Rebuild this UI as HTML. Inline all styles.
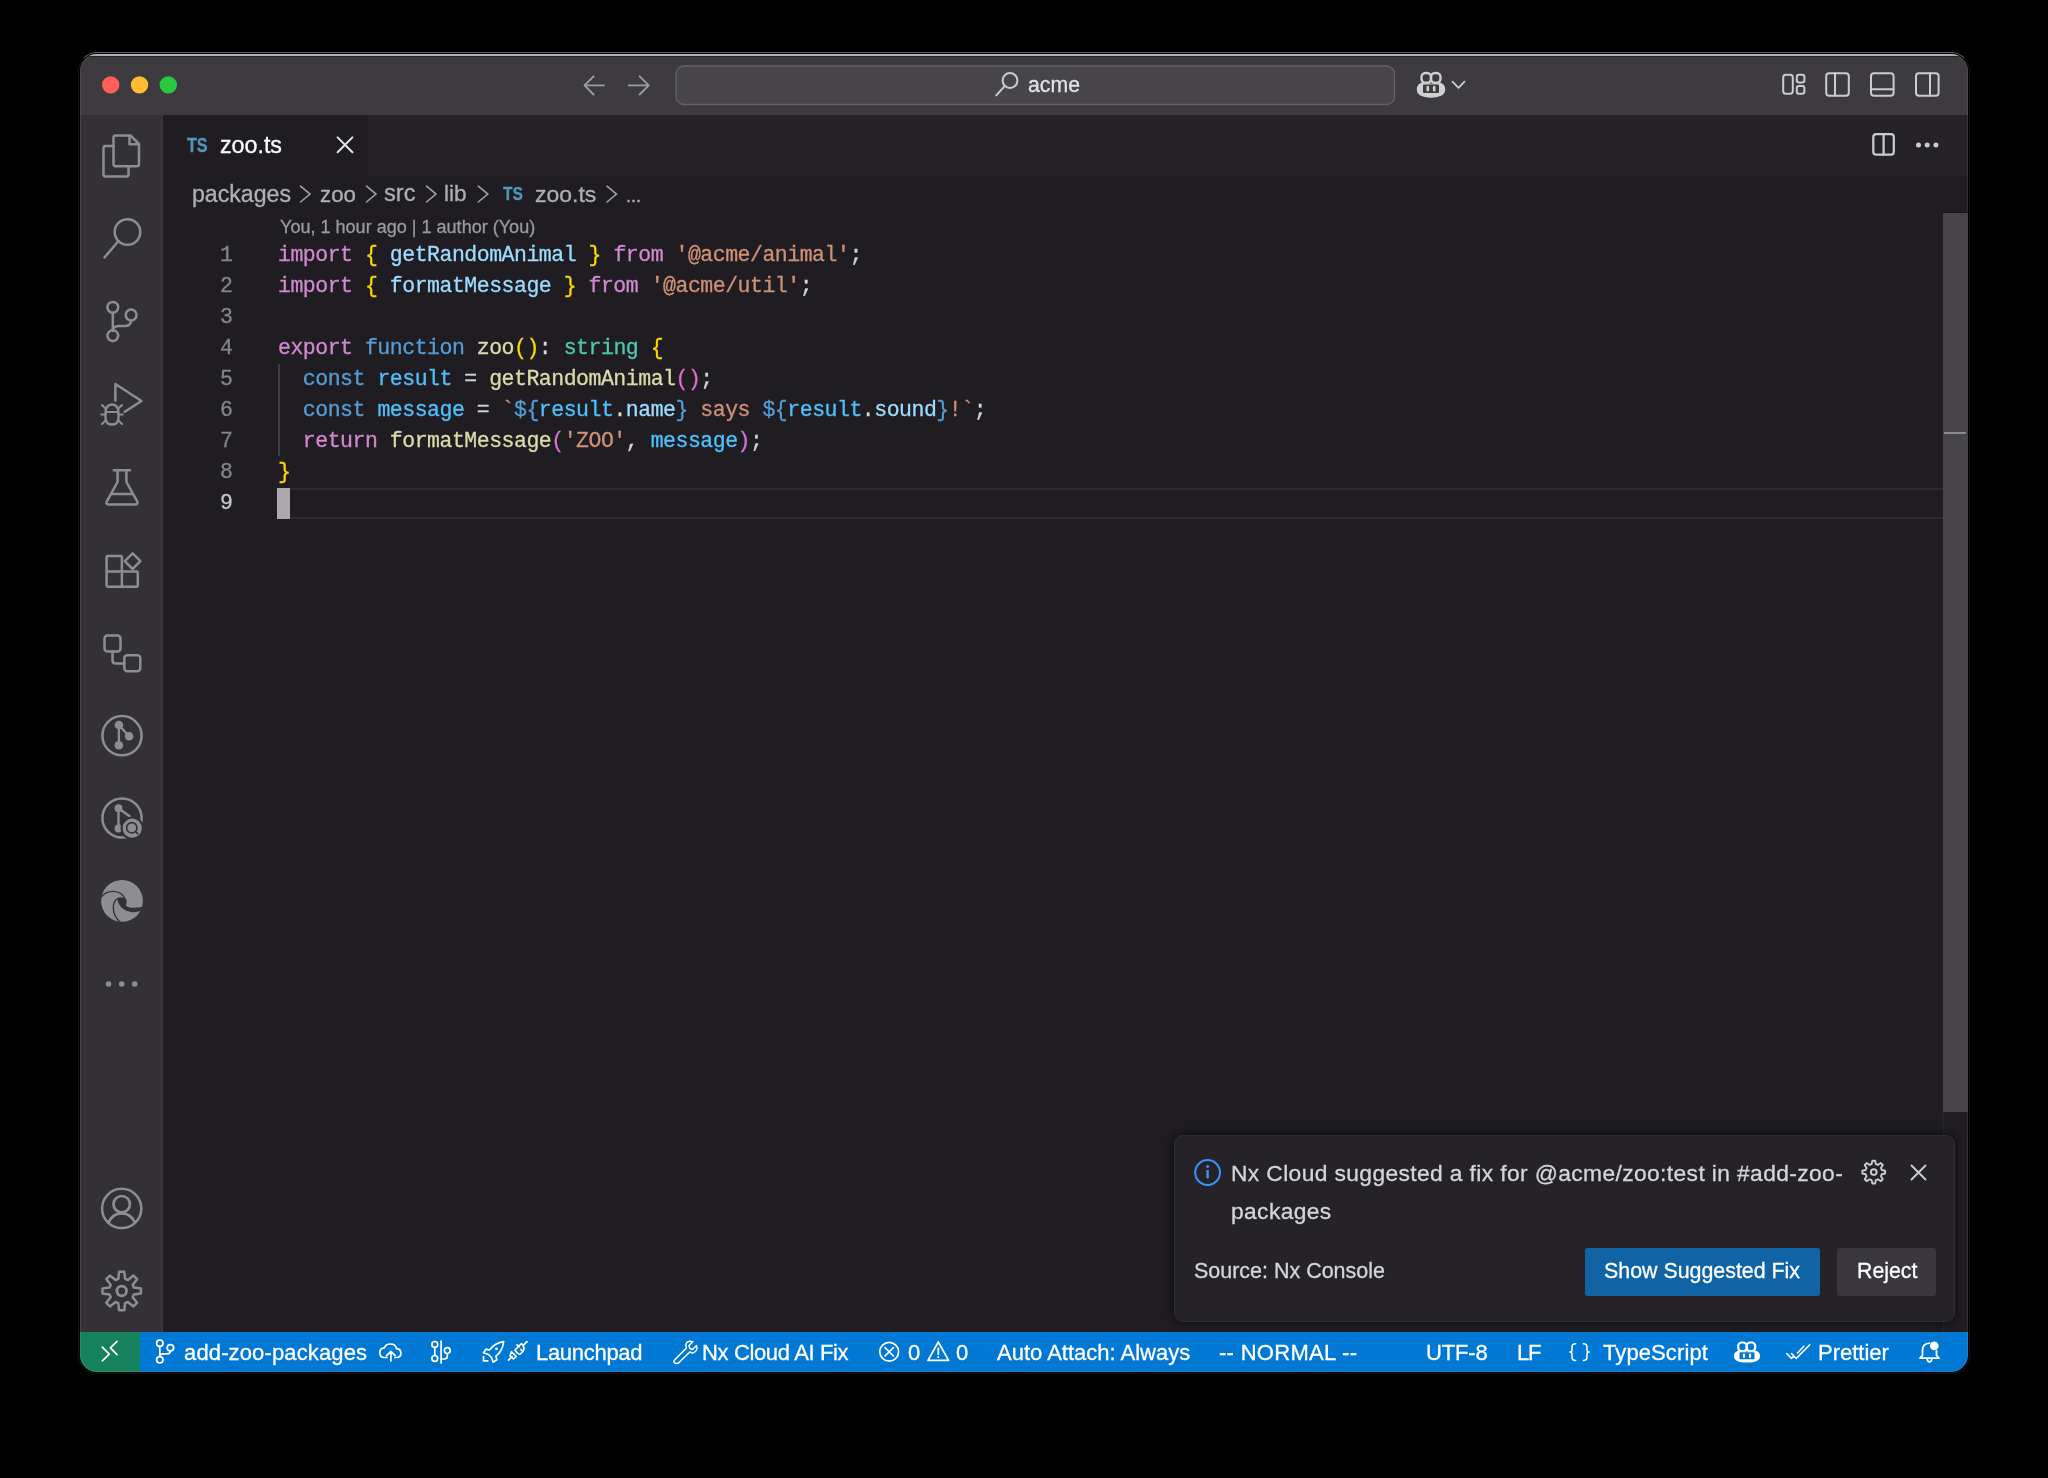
<!DOCTYPE html>
<html><head><meta charset="utf-8">
<style>
html,body{margin:0;padding:0;background:#000;width:2048px;height:1478px;overflow:hidden;}
body{position:relative;font-family:"Liberation Sans",sans-serif;}
.a{position:absolute;}
#win{position:absolute;left:80px;top:54px;width:1888px;height:1318px;border-radius:17px;overflow:hidden;background:#1f1d21;}
.t{position:absolute;white-space:pre;line-height:1;will-change:transform;-webkit-text-stroke:0.3px currentColor;}
.code{will-change:transform;font-family:"Liberation Mono",monospace;font-size:21.5px;letter-spacing:-0.482px;-webkit-text-stroke:0.3px currentColor;white-space:pre;position:absolute;line-height:31px;height:31px;}
svg{position:absolute;left:0;top:0;overflow:visible;}
</style></head>
<body>
<div class="a" style="left:78px;top:52px;width:1892px;height:1322px;box-sizing:border-box;border-radius:19px;background:#000;border:1px solid #141316;border-top-color:#5f5d60;"></div>
<div id="win">
  <div class="a" style="left:0;top:0;width:1888px;height:61px;background:#3d3b3f"></div>
  <div class="a" style="left:0;top:0;width:1888px;height:2px;background:#adabae"></div>
  <div class="a" style="left:0;top:2px;width:1888px;height:1px;background:#252327"></div>
  <div class="a" style="left:0;top:61px;width:83px;height:1217px;background:#333135"></div>
  <div class="a" style="left:81px;top:61px;width:2px;height:1217px;background:#38363a"></div>
  <div class="a" style="left:83px;top:61px;width:1805px;height:61px;background:#252328"></div>
  <div class="a" style="left:83px;top:61px;width:205px;height:61px;background:#1f1d21"></div>
  <div class="a" style="left:0;top:1278px;width:1888px;height:40px;background:#0078d4"></div>
  <div class="a" style="left:0;top:1278px;width:60px;height:40px;background:#16825d"></div>
  <div class="a" style="left:0;top:0;width:1888px;height:1318px;border-radius:17px;box-shadow:inset 0 0 0 1px rgba(255,255,255,0.09);"></div>
</div>
<!-- editor decorations -->
<div class="a" style="left:277px;top:488px;width:1666px;height:2px;background:#2c2a2e"></div>
<div class="a" style="left:277px;top:516.5px;width:1666px;height:2px;background:#2c2a2e"></div>
<div class="a" style="left:277px;top:488px;width:13px;height:31px;background:#aea8ae"></div>
<div class="a" style="left:277.5px;top:364px;width:2px;height:92px;background:#403e42"></div>
<!-- scrollbar -->
<div class="a" style="left:1943px;top:212px;width:24.5px;height:1px;background:#141315"></div>
<div class="a" style="left:1943px;top:213px;width:24.5px;height:899px;background:#464448"></div>
<div class="a" style="left:1944px;top:432px;width:22px;height:2px;background:#8a898c"></div>
<div class="a" style="left:1943px;top:1112px;width:1px;height:220px;background:#29272b"></div>

<!-- notification -->
<div class="a" style="left:1175px;top:1135.5px;width:779px;height:185px;border-radius:8px;background:#252328;box-shadow:0 0 0 1px #2f2d32, 0 0 10px 2px rgba(0,0,0,0.55);"></div>
<div class="a" style="left:1585px;top:1247.5px;width:235px;height:48px;border-radius:3px;background:#1064a6"></div>
<div class="a" style="left:1837px;top:1247.5px;width:99px;height:48px;border-radius:3px;background:#3a383e"></div>

<svg width="2048" height="1478" viewBox="0 0 2048 1478" fill="none" stroke-linecap="round" stroke-linejoin="round">
<!-- traffic lights -->
<circle cx="110.7" cy="84.9" r="8.7" fill="#ff5f57"/>
<circle cx="139.5" cy="84.9" r="8.7" fill="#febc2e"/>
<circle cx="168.3" cy="84.9" r="8.7" fill="#28c840"/>
<!-- nav arrows -->
<g stroke="#9e9da0" stroke-width="1.8">
<path d="M604,85.4H584.8M593.6,76.3L584.5,85.4L593.6,94.5"/>
<path d="M628.8,85.4H648.6M639.6,76.3L648.8,85.4L639.6,94.5"/>
</g>
<!-- search box -->
<rect x="676" y="66" width="718.5" height="38.5" rx="8" fill="#47454a" stroke="#636166" stroke-width="1.3"/>
<g stroke="#cccccc" stroke-width="2">
<circle cx="1010" cy="80.5" r="7.4"/>
<path d="M1004.6,86.2L996.3,95.3"/>
</g>
<!-- copilot title -->
<g stroke="#d0d0d0" stroke-width="2.4" fill="none">
<rect x="1421.5" y="73" width="9.5" height="9.8" rx="4"/>
<rect x="1431" y="73" width="9.5" height="9.8" rx="4"/>
<path d="M1423,83.5 Q1418,84.5 1418,89.5 Q1418,96 1431,96.5 Q1444,96 1444,89.5 Q1444,84.5 1439,83.5" fill="#d0d0d0"/>
<rect x="1423" y="84.5" width="16" height="8.5" rx="1" fill="#3d3b3f" stroke="none"/>
<path d="M1427.8,87v3.2M1434.2,87v3.2" stroke-width="2.6"/>
</g>
<path d="M1452.5,81.6L1458.5,87.8L1464.5,81.6" stroke="#cccccc" stroke-width="1.8"/>
<!-- layout icons -->
<g stroke="#cccccc" stroke-width="2">
<rect x="1783.2" y="74.7" width="9.6" height="19" rx="2.6"/>
<rect x="1796.8" y="74.7" width="7.6" height="7.8" rx="2.2"/>
<rect x="1796.8" y="86" width="7.6" height="7.8" rx="2.2"/>
<rect x="1826.2" y="73.2" width="22.6" height="22.6" rx="3"/>
<path d="M1835,73.2V95.8"/>
<rect x="1871" y="73.2" width="22.6" height="22.6" rx="3"/>
<path d="M1871,89.3H1893.6"/>
<rect x="1916" y="73.2" width="22.6" height="22.6" rx="3"/>
<path d="M1930,73.2V95.8"/>
</g>
<!-- tab close -->
<path d="M337.6,137.4L352.4,152.2M352.4,137.4L337.6,152.2" stroke="#e6e6e6" stroke-width="2"/>
<!-- split + more -->
<g stroke="#cccccc" stroke-width="2.2">
<rect x="1873.3" y="134.2" width="20.5" height="20.5" rx="3"/>
<path d="M1883.6,134.2V154.7"/>
</g>
<g fill="#cccccc">
<circle cx="1918.5" cy="145" r="2.5"/><circle cx="1927.2" cy="145" r="2.5"/><circle cx="1935.9" cy="145" r="2.5"/>
</g>
<!-- breadcrumb chevrons -->
<g stroke="#a0a0a0" stroke-width="1.6" stroke-linejoin="miter">
<path d="M300.5,186.2L310.0,194.1L300.5,202"/>
<path d="M366.5,186.2L376.0,194.1L366.5,202"/>
<path d="M426.5,186.2L436.0,194.1L426.5,202"/>
<path d="M478.3,186.2L487.8,194.1L478.3,202"/>
<path d="M607,186.2L616.5,194.1L607,202"/>
</g>

<!-- activity bar icons -->
<g stroke="#8e8d91" stroke-width="2.5">
<!-- explorer -->
<path d="M128.5,166.5V174.5Q128.5,176.5 126.5,176.5H105.5Q103.5,176.5 103.5,174.5V148Q103.5,146 105.5,146H113.5"/>
<path d="M115.7,135.5H130.5L139,144V164Q139,166.3 136.8,166.3H115.7Q113.5,166.3 113.5,164V137.7Q113.5,135.5 115.7,135.5Z"/>
<path d="M129.5,136V144.2H138.5" />
<!-- search -->
<circle cx="127.5" cy="232" r="12.8"/>
<path d="M118.5,241L104.5,257.5"/>
<!-- scm -->
<circle cx="112.8" cy="307.3" r="5.4"/>
<circle cx="131.1" cy="315" r="5.4"/>
<circle cx="112.8" cy="335.6" r="5.4"/>
<path d="M112.8,312.7V330.2"/>
<path d="M131.1,320.4Q131.1,326 124,326H119Q112.8,326 112.8,331"/>
<!-- debug -->
<path d="M115.4,400.5V384L141.5,401L124.8,411.8"/>
<path d="M105.5,413.5Q105.5,404.5 112,404.5Q118.5,404.5 118.5,413.5V417.5Q118.5,424.5 112,424.5Q105.5,424.5 105.5,417.5Z" stroke-width="2.3"/>
<path d="M105.6,412H118.4M101.2,414.5H105.5M118.5,414.5H122.8M102,405L106,409M122,405L118,409M102,424L106,420M122,424L118,420" stroke-width="2.1"/>
<!-- testing -->
<path d="M113.8,470.3H130M117.6,470.3V482L106.8,501.3Q105.5,504.5 108.5,504.5H135.5Q138.5,504.5 137.2,501.3L126.4,482V470.3M111.5,494H132.5"/>
<!-- extensions -->
<path d="M107.8,555.9H120.7Q121.9,555.9 121.9,557.1V586.8H107.8Q106.6,586.8 106.6,585.6V557.1Q106.6,555.9 107.8,555.9ZM106.6,571.6H136.6Q137.8,571.6 137.8,572.8V585.6Q137.8,586.8 136.6,586.8H121.9"/>
<path d="M132.6,553.4L140.4,561.2L132.6,569L124.8,561.2Z"/>
<!-- remote explorer -->
<rect x="104.5" y="635.5" width="16" height="16" rx="3"/>
<rect x="124.3" y="655.3" width="16" height="16" rx="3"/>
<path d="M112.5,651.5V660.5Q112.5,663.5 115.5,663.5H124.3"/>
<!-- nx -->
<circle cx="122" cy="735.7" r="19.6"/>
<circle cx="122" cy="818" r="19.6"/>
<!-- accounts -->
<circle cx="121.7" cy="1208.4" r="19.6"/>
<circle cx="121.7" cy="1204.2" r="8.2" stroke-width="2.7"/>
<path d="M108.5,1222.8Q112.5,1213.4 121.7,1213.4Q130.9,1213.4 134.9,1222.8" stroke-width="2.7"/>
<!-- settings gear -->
<circle cx="121.7" cy="1291" r="4.8" stroke-width="2.8"/>
</g>
<g fill="#8e8d91" stroke="none">
<circle cx="118.9" cy="725" r="4.3"/><circle cx="129.1" cy="736.2" r="4.3"/><circle cx="118.9" cy="745.3" r="4.3"/>
</g>
<path d="M118.9,725V745.3M118.9,725L129.1,736.2" stroke="#8e8d91" stroke-width="2.4"/>
<!-- nx cloud -->
<g fill="#8e8d91" stroke="none">
<circle cx="118.5" cy="808.2" r="3.9"/><circle cx="118.5" cy="828.5" r="3.9"/>
</g>
<path d="M118.5,808.2V828.5M118.5,808.2L130.5,817" stroke="#8e8d91" stroke-width="2.4"/>
<circle cx="132.2" cy="828.2" r="10.6" fill="#8e8d91" stroke="#333135" stroke-width="2"/>
<circle cx="131.8" cy="827.8" r="5.2" fill="none" stroke="#333135" stroke-width="1.6"/>
<path d="M135.6,831.6L137.6,833.6" stroke="#333135" stroke-width="1.8"/>
<!-- edge -->
<circle cx="122" cy="900.9" r="20.9" fill="#8e8d91" stroke="none"/>
<path d="M101.2,897.2C106,890.2 121,887.5 125.8,900.5M118.8,898.2C112,900.5 110.5,914 120.5,922.5" stroke="#333135" stroke-width="1.4" fill="none"/>
<path fill="#333135" stroke="none" d="M118.7,897.7C120.5,896.8 125,896.8 126.4,900.4C127.2,902.5 126,904 125.8,905.4C128,907.5 133,908.6 142.5,906.8L143,909C140,912 134,912.6 130.8,911.9C126.5,911.5 121.5,909 119,904.1C117.5,901.5 117,899 118.7,897.7Z"/>
<!-- more dots -->
<g fill="#8e8d91"><circle cx="108.6" cy="984" r="2.8"/><circle cx="121.7" cy="984" r="2.8"/><circle cx="134.7" cy="984" r="2.8"/></g>
<!-- gear outline -->
<path stroke="#8e8d91" stroke-width="2.5" d="M118.28,1278.87L119.12,1271.77L124.28,1271.77L125.12,1278.87L127.86,1280.01L133.47,1275.58L137.12,1279.23L132.69,1284.84L133.83,1287.58L140.93,1288.42L140.93,1293.58L133.83,1294.42L132.69,1297.16L137.12,1302.77L133.47,1306.42L127.86,1301.99L125.12,1303.13L124.28,1310.23L119.12,1310.23L118.28,1303.13L115.54,1301.99L109.93,1306.42L106.28,1302.77L110.71,1297.16L109.57,1294.42L102.47,1293.58L102.47,1288.42L109.57,1287.58L110.71,1284.84L106.28,1279.23L109.93,1275.58L115.54,1280.01Z"/>

<!-- notification icons -->
<circle cx="1207.6" cy="1172.5" r="12.4" stroke="#3794ff" stroke-width="2"/>
<circle cx="1207.6" cy="1166.4" r="1.5" fill="#3794ff"/>
<path d="M1207.6,1170V1178.4" stroke="#3794ff" stroke-width="2.4" stroke-linecap="butt"/>
<path stroke="#cccccc" stroke-width="1.9" d="M1871.62,1164.08L1872.40,1160.68L1875.10,1160.68L1875.88,1164.08L1877.92,1164.92L1880.87,1163.07L1882.78,1164.98L1880.93,1167.93L1881.77,1169.97L1885.17,1170.75L1885.17,1173.45L1881.77,1174.23L1880.93,1176.27L1882.78,1179.22L1880.87,1181.13L1877.92,1179.28L1875.88,1180.12L1875.10,1183.52L1872.40,1183.52L1871.62,1180.12L1869.58,1179.28L1866.63,1181.13L1864.72,1179.22L1866.57,1176.27L1865.73,1174.23L1862.33,1173.45L1862.33,1170.75L1865.73,1169.97L1866.57,1167.93L1864.72,1164.98L1866.63,1163.07L1869.58,1164.92Z"/>
<circle cx="1873.75" cy="1172.1" r="2.9" stroke="#cccccc" stroke-width="1.9"/>
<path d="M1911.5,1165.5L1925.5,1179.5M1925.5,1165.5L1911.5,1179.5" stroke="#cccccc" stroke-width="1.9"/>

<!-- status bar icons -->
<g stroke="#ffffff" stroke-width="1.7">
<path d="M102.3,1347.1L109.3,1354.1L102.3,1360.8M117,1341.3L110.4,1347.9L117,1354.6"/>
<circle cx="159.8" cy="1343.2" r="3.2"/>
<circle cx="170.4" cy="1347.8" r="3.2"/>
<circle cx="159.8" cy="1359.8" r="3.2"/>
<path d="M159.8,1346.4V1356.6M170.4,1351Q170.4,1353.8 167,1353.8H163Q159.8,1353.8 159.8,1356"/>
</g>

<!-- status bar icons 2 -->
<g stroke="#ffffff" stroke-width="1.7">
<!-- cloud upload -->
<path d="M387,1357.5H384Q379.8,1357.5 379.8,1352.5Q379.8,1348 384.5,1347.8Q385.5,1344 390.5,1344Q395.5,1344 396.5,1348.6Q400.9,1349 400.9,1353.2Q400.9,1357.5 396.5,1357.5H394.8"/>
<path d="M390.9,1361V1351.6M386.6,1355.6L390.9,1351.3L395.2,1355.6"/>
<!-- git compare -->
<circle cx="434.8" cy="1344.4" r="2.9"/>
<circle cx="434.8" cy="1358.4" r="2.9"/>
<path d="M434.8,1347.3V1355.5"/>
<path d="M441.1,1341.2V1363"/>
<circle cx="447.3" cy="1350.6" r="2.9"/>
<path d="M447.3,1353.5V1356Q447.3,1359 444.3,1359H441.1"/>
<!-- rocket -->
<path d="M503.6,1341.7Q495,1343 489.5,1350L486,1349.2L483.5,1352.8L488.5,1354.5L491.5,1357.5L493.2,1362.2L496.8,1359.8L496,1356Q503,1350.5 503.6,1341.7Z"/>
<circle cx="496.5" cy="1348.8" r="1.4" fill="#fff" stroke="none"/>
<path d="M483.5,1356.5V1360.8H487.8"/>
<!-- plug -->
<path d="M508.5,1360.2L512,1356.7M523.5,1345.2L527,1341.7"/>
<path d="M511.5,1351.8L516.2,1356.5L513.5,1359Q511.5,1357 510,1355.8Z"/>
<path d="M515,1350L521.5,1343.5Q525.5,1347.5 522.8,1351.5L520.3,1354Q518.5,1355.3 515,1350Z"/>
<path d="M517,1344.8L519,1346.8M520.8,1349.5L522.8,1351.5"/>
<!-- wrench -->
<path d="M675,1359.5L686.5,1348Q684.5,1343 688.5,1341.5Q690.5,1340.8 692.8,1341.8L688.8,1345.8L690,1348.5L692.5,1349.5L696.5,1345.5Q697.5,1348 696.5,1350Q694,1354.5 689.8,1352L678.5,1363Q675.5,1364.5 674,1362Q673.5,1360.5 675,1359.5Z" stroke-width="1.5"/>
<!-- error -->
<circle cx="889.2" cy="1351.8" r="9.4"/>
<path d="M885,1347.6L893.4,1356M893.4,1347.6L885,1356"/>
<!-- warning -->
<path d="M938.3,1342L948.6,1360.4H928Z"/>
<path d="M938.3,1348.5V1354.2M938.3,1357V1357.3" stroke-width="1.9"/>
<!-- braces -->
<path d="M1575.6,1343.8Q1572,1343.8 1572,1347V1350Q1572,1352.1 1569.8,1352.1Q1572,1352.1 1572,1354.2V1357.2Q1572,1360.4 1575.6,1360.4M1583.4,1343.8Q1587,1343.8 1587,1347V1350Q1587,1352.1 1589.3,1352.1Q1587,1352.1 1587,1354.2V1357.2Q1587,1360.4 1583.4,1360.4" stroke-width="1.5"/>
<!-- double check -->
<path d="M1786.8,1353.5L1791.5,1358.5L1793.5,1356.2M1791.5,1353.5L1796.2,1358.5L1809.8,1344.8M1797.5,1353L1803.8,1346.2" stroke-width="1.6"/>
<!-- bell -->
<path d="M1929.5,1343.2Q1922.5,1343.5 1922.5,1350.5V1355.5L1920,1358.2H1939L1936.5,1355.5V1351" stroke-width="1.8"/>
<path d="M1927.3,1359.5Q1927.5,1361.8 1929.5,1361.8Q1931.5,1361.8 1931.7,1359.5" stroke-width="1.8"/>
</g>
<circle cx="1934.3" cy="1345.9" r="4.3" fill="#fff"/>
<!-- copilot status -->
<g stroke="#ffffff" stroke-width="2.2">
<rect x="1738.2" y="1342.5" width="8.5" height="8.7" rx="3.6"/>
<rect x="1746.7" y="1342.5" width="8.5" height="8.7" rx="3.6"/>
<path d="M1740,1351.5Q1735,1352 1735,1356Q1735,1361.5 1747,1361.5Q1759,1361.5 1759,1356Q1759,1352 1754,1351.5" fill="#fff"/>
<rect x="1739.5" y="1352.2" width="15" height="7" rx="1" fill="#0078d4" stroke="none"/>
<path d="M1744,1354.5v2.5M1750,1354.5v2.5" stroke-width="2.2"/>
</g>

</svg>
<div class="t" style="left:1028.00px;top:75.49px;font-size:21.27px;color:#e2e2e2;font-family:'Liberation Sans',sans-serif;font-weight:normal;letter-spacing:0px;">acme</div>
<div class="t" style="left:187.40px;top:136.07px;font-size:19.40px;color:#519aba;font-family:'Liberation Sans',sans-serif;font-weight:bold;letter-spacing:0px;transform:scaleX(0.83);transform-origin:0 0;">TS</div>
<div class="t" style="left:219.60px;top:133.82px;font-size:23.24px;color:#ffffff;font-family:'Liberation Sans',sans-serif;font-weight:normal;letter-spacing:0px;">zoo.ts</div>
<div class="t" style="left:191.70px;top:182.92px;font-size:23.13px;color:#b0b0b0;font-family:'Liberation Sans',sans-serif;font-weight:normal;letter-spacing:0px;">packages</div>
<div class="t" style="left:319.90px;top:183.64px;font-size:22.27px;color:#b0b0b0;font-family:'Liberation Sans',sans-serif;font-weight:normal;letter-spacing:0px;">zoo</div>
<div class="t" style="left:384.30px;top:182.49px;font-size:23.63px;color:#b0b0b0;font-family:'Liberation Sans',sans-serif;font-weight:normal;letter-spacing:0px;">src</div>
<div class="t" style="left:444.40px;top:183.38px;font-size:22.58px;color:#b0b0b0;font-family:'Liberation Sans',sans-serif;font-weight:normal;letter-spacing:0px;">lib</div>
<div class="t" style="left:502.80px;top:184.67px;font-size:18.70px;color:#519aba;font-family:'Liberation Sans',sans-serif;font-weight:bold;letter-spacing:0px;transform:scaleX(0.83);transform-origin:0 0;">TS</div>
<div class="t" style="left:535.00px;top:183.05px;font-size:22.98px;color:#b0b0b0;font-family:'Liberation Sans',sans-serif;font-weight:normal;letter-spacing:0px;">zoo.ts</div>
<div class="t" style="left:625.80px;top:187.15px;font-size:18.13px;color:#b0b0b0;font-family:'Liberation Sans',sans-serif;font-weight:normal;letter-spacing:0px;">...</div>
<div class="t" style="left:279.60px;top:218.21px;font-size:18.06px;color:#9a9a9a;font-family:'Liberation Sans',sans-serif;font-weight:normal;letter-spacing:0px;">You, 1 hour ago | 1 author (You)</div>
<div class="code" style="left:277.5px;top:240.08px;"><span style="color:#d08ad0">import</span><span style="color:#d4d4d4"> </span><span style="color:#ffd700">{</span><span style="color:#d4d4d4"> </span><span style="color:#9cdcfe">getRandomAnimal</span><span style="color:#d4d4d4"> </span><span style="color:#ffd700">}</span><span style="color:#d4d4d4"> </span><span style="color:#d08ad0">from</span><span style="color:#d4d4d4"> </span><span style="color:#ce9178">&#x27;@acme/animal&#x27;</span><span style="color:#d4d4d4">;</span></div>
<div class="code" style="left:219.58px;top:240.08px;width:12.42px;text-align:right;color:#858585">1</div>
<div class="code" style="left:277.5px;top:271.08px;"><span style="color:#d08ad0">import</span><span style="color:#d4d4d4"> </span><span style="color:#ffd700">{</span><span style="color:#d4d4d4"> </span><span style="color:#9cdcfe">formatMessage</span><span style="color:#d4d4d4"> </span><span style="color:#ffd700">}</span><span style="color:#d4d4d4"> </span><span style="color:#d08ad0">from</span><span style="color:#d4d4d4"> </span><span style="color:#ce9178">&#x27;@acme/util&#x27;</span><span style="color:#d4d4d4">;</span></div>
<div class="code" style="left:219.58px;top:271.08px;width:12.42px;text-align:right;color:#858585">2</div>
<div class="code" style="left:277.5px;top:302.08px;"></div>
<div class="code" style="left:219.58px;top:302.08px;width:12.42px;text-align:right;color:#858585">3</div>
<div class="code" style="left:277.5px;top:333.08px;"><span style="color:#d08ad0">export</span><span style="color:#d4d4d4"> </span><span style="color:#569cd6">function</span><span style="color:#d4d4d4"> </span><span style="color:#dcdcaa">zoo</span><span style="color:#ffd700">()</span><span style="color:#d4d4d4">:</span><span style="color:#d4d4d4"> </span><span style="color:#4ec9b0">string</span><span style="color:#d4d4d4"> </span><span style="color:#ffd700">{</span></div>
<div class="code" style="left:219.58px;top:333.08px;width:12.42px;text-align:right;color:#858585">4</div>
<div class="code" style="left:277.5px;top:364.08px;"><span style="color:#d4d4d4">  </span><span style="color:#569cd6">const</span><span style="color:#d4d4d4"> </span><span style="color:#4fc1ff">result</span><span style="color:#d4d4d4"> </span><span style="color:#d4d4d4">=</span><span style="color:#d4d4d4"> </span><span style="color:#dcdcaa">getRandomAnimal</span><span style="color:#da70d6">()</span><span style="color:#d4d4d4">;</span></div>
<div class="code" style="left:219.58px;top:364.08px;width:12.42px;text-align:right;color:#858585">5</div>
<div class="code" style="left:277.5px;top:395.08px;"><span style="color:#d4d4d4">  </span><span style="color:#569cd6">const</span><span style="color:#d4d4d4"> </span><span style="color:#4fc1ff">message</span><span style="color:#d4d4d4"> </span><span style="color:#d4d4d4">=</span><span style="color:#d4d4d4"> </span><span style="color:#ce9178">`</span><span style="color:#569cd6">${</span><span style="color:#4fc1ff">result</span><span style="color:#d4d4d4">.</span><span style="color:#9cdcfe">name</span><span style="color:#569cd6">}</span><span style="color:#ce9178"> says </span><span style="color:#569cd6">${</span><span style="color:#4fc1ff">result</span><span style="color:#d4d4d4">.</span><span style="color:#9cdcfe">sound</span><span style="color:#569cd6">}</span><span style="color:#ce9178">!`</span><span style="color:#d4d4d4">;</span></div>
<div class="code" style="left:219.58px;top:395.08px;width:12.42px;text-align:right;color:#858585">6</div>
<div class="code" style="left:277.5px;top:426.08px;"><span style="color:#d4d4d4">  </span><span style="color:#d08ad0">return</span><span style="color:#d4d4d4"> </span><span style="color:#dcdcaa">formatMessage</span><span style="color:#da70d6">(</span><span style="color:#ce9178">&#x27;ZOO&#x27;</span><span style="color:#d4d4d4">, </span><span style="color:#4fc1ff">message</span><span style="color:#da70d6">)</span><span style="color:#d4d4d4">;</span></div>
<div class="code" style="left:219.58px;top:426.08px;width:12.42px;text-align:right;color:#858585">7</div>
<div class="code" style="left:277.5px;top:457.08px;"><span style="color:#ffd700">}</span></div>
<div class="code" style="left:219.58px;top:457.08px;width:12.42px;text-align:right;color:#858585">8</div>
<div class="code" style="left:277.5px;top:488.08px;"></div>
<div class="code" style="left:219.58px;top:488.08px;width:12.42px;text-align:right;color:#c6c6c6">9</div>
<div class="t" style="left:1231.00px;top:1162.20px;font-size:22.80px;color:#d6d6d6;font-family:'Liberation Sans',sans-serif;font-weight:normal;letter-spacing:0.38px;">Nx Cloud suggested a fix for @acme/zoo:test in #add-zoo-</div>
<div class="t" style="left:1231.00px;top:1200.20px;font-size:22.80px;color:#d6d6d6;font-family:'Liberation Sans',sans-serif;font-weight:normal;letter-spacing:0.38px;">packages</div>
<div class="t" style="left:1194.00px;top:1261.31px;font-size:21.48px;color:#d6d6d6;font-family:'Liberation Sans',sans-serif;font-weight:normal;letter-spacing:0px;">Source: Nx Console</div>
<div class="t" style="left:1604.00px;top:1261.39px;font-size:21.39px;color:#ffffff;font-family:'Liberation Sans',sans-serif;font-weight:normal;letter-spacing:0px;">Show Suggested Fix</div>
<div class="t" style="left:1856.50px;top:1261.45px;font-size:21.31px;color:#ffffff;font-family:'Liberation Sans',sans-serif;font-weight:normal;letter-spacing:0px;">Reject</div>
<div class="t" style="left:183.90px;top:1341.87px;font-size:22.00px;color:#ffffff;font-family:'Liberation Sans',sans-serif;font-weight:normal;letter-spacing:0.14px;">add-zoo-packages</div>
<div class="t" style="left:536.40px;top:1341.87px;font-size:22.00px;color:#ffffff;font-family:'Liberation Sans',sans-serif;font-weight:normal;letter-spacing:-0.3px;">Launchpad</div>
<div class="t" style="left:702.30px;top:1341.87px;font-size:22.00px;color:#ffffff;font-family:'Liberation Sans',sans-serif;font-weight:normal;letter-spacing:-0.36px;">Nx Cloud AI Fix</div>
<div class="t" style="left:907.50px;top:1341.87px;font-size:22.00px;color:#ffffff;font-family:'Liberation Sans',sans-serif;font-weight:normal;letter-spacing:0px;">0</div>
<div class="t" style="left:956.20px;top:1341.87px;font-size:22.00px;color:#ffffff;font-family:'Liberation Sans',sans-serif;font-weight:normal;letter-spacing:0px;">0</div>
<div class="t" style="left:997.00px;top:1341.87px;font-size:22.00px;color:#ffffff;font-family:'Liberation Sans',sans-serif;font-weight:normal;letter-spacing:0px;">Auto Attach: Always</div>
<div class="t" style="left:1219.00px;top:1341.87px;font-size:22.00px;color:#ffffff;font-family:'Liberation Sans',sans-serif;font-weight:normal;letter-spacing:0.29px;">-- NORMAL --</div>
<div class="t" style="left:1426.00px;top:1341.87px;font-size:22.00px;color:#ffffff;font-family:'Liberation Sans',sans-serif;font-weight:normal;letter-spacing:-0.13px;">UTF-8</div>
<div class="t" style="left:1517.00px;top:1341.87px;font-size:22.00px;color:#ffffff;font-family:'Liberation Sans',sans-serif;font-weight:normal;letter-spacing:-1.2px;">LF</div>
<div class="t" style="left:1602.50px;top:1341.87px;font-size:22.00px;color:#ffffff;font-family:'Liberation Sans',sans-serif;font-weight:normal;letter-spacing:0.1px;">TypeScript</div>
<div class="t" style="left:1817.70px;top:1341.87px;font-size:22.00px;color:#ffffff;font-family:'Liberation Sans',sans-serif;font-weight:normal;letter-spacing:0px;">Prettier</div>
</body></html>
